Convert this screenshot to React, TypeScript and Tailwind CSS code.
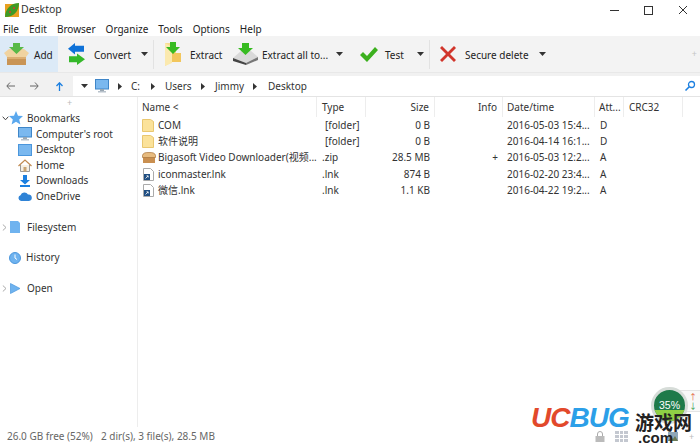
import React from "react";

const Caret = () => (
  <svg width="7" height="4" viewBox="0 0 7 4" className="shrink-0">
    <path d="M0 0h7L3.5 4z" fill="#333" />
  </svg>
);

const PathArrow = () => (
  <svg width="4" height="7" viewBox="0 0 4 7" className="shrink-0">
    <path d="M0 0l4 3.5L0 7z" fill="#333" />
  </svg>
);

const Divider = () => <div className="w-px h-[29px] bg-[#e2e2e2] shrink-0" />;

const Leaf = () => (
  <svg width="16" height="16" viewBox="0 0 16 16">
    <rect x="1" y="2" width="14" height="13" fill="#e8a020" />
    <path d="M1 15C1 7 7 1 15 1c0 8-5 14-14 14z" fill="#3f9a25" />
    <circle cx="6" cy="10" r="1" fill="#d33" />
    <circle cx="10" cy="6" r="1" fill="#d33" />
  </svg>
);

const AddIcon = () => (
  <svg width="25" height="22" viewBox="0 0 25 22" className="shrink-0">
    <path d="M3 11h19v11H3z" fill="#c99556" />
    <path d="M0 10l5-4h15l5 4-3 4H3z" fill="#f0d3a0" />
    <path d="M3 14h19v2H3z" fill="#dcae72" />
    <path d="M9 0h7v4h4l-7.500 7L5 4h4z" fill="#58b948" />
  </svg>
);

const ConvertIcon = () => (
  <svg width="17" height="22" viewBox="0 0 17 25" preserveAspectRatio="none" className="shrink-0">
    <path d="M7 0v3h9v7H7v3L0 6.500z" fill="#0f72d8" />
    <path d="M9 12v3H1v7h8v3l8-6.500z" fill="#35b82a" />
  </svg>
);

const FolderIcon = () => (
  <svg width="18" height="25" viewBox="0 0 18 25" className="shrink-0">
    <path d="M1 1h11v10h5v9H8l-7 4z" fill="#f7dd8f" />
    <path d="M8 11h9v9H8z" fill="#f2c65c" />
    <path d="M1 1l7 4v16l-7 3z" fill="#fbe9ae" />
    <path d="M6 0h6v5h4l-7 7-7-7h4z" fill="#37bb21" />
  </svg>
);

const DriveIcon = () => (
  <svg width="26" height="22" viewBox="0 0 26 22" className="shrink-0">
    <path d="M1 15l8-7h10l7 6-12 6z" fill="#d9d9d9" />
    <path d="M1 15l13 5v2L1 18z" fill="#444" />
    <path d="M14 20l12-6v3l-12 5z" fill="#777" />
    <path d="M10 0h7v5h4l-7.500 7L6 5h4z" fill="#37bb21" />
  </svg>
);

const ComputerIcon = () => (
  <svg width="14" height="14" viewBox="0 0 14 14" className="shrink-0">
    <rect x="0.500" y="0.500" width="13" height="9.500" fill="#7ab8ef" stroke="#3f86c8" />
    <rect x="5" y="10" width="4" height="2" fill="#9aa7b2" />
    <rect x="3" y="12" width="8" height="1.500" fill="#b8c2cb" />
  </svg>
);

const SideFolder = () => (
  <svg width="14" height="12" viewBox="0 0 14 12" className="shrink-0">
    <rect x="0.500" y="0.500" width="13" height="11" fill="#7ab8ef" stroke="#4b96dc" />
  </svg>
);

const HomeIcon = () => (
  <svg width="14" height="13" viewBox="0 0 14 13" className="shrink-0">
    <path d="M2.500 6v6.500h9V6" fill="#f6efe2" stroke="#999" />
    <path d="M0.500 7L7 1l6.500 6" fill="none" stroke="#c08a50" strokeWidth="1.200" />
    <rect x="5.500" y="8" width="3" height="4.500" fill="#c9a472" />
  </svg>
);

const DownloadIcon = () => (
  <svg width="10" height="12" viewBox="0 0 10 12" className="shrink-0 ml-[2px]">
    <path d="M3 0h4v5h3L5 9.500 0 5h3z" fill="#1b7fe0" />
    <rect x="0" y="10" width="10" height="2" fill="#1b7fe0" />
  </svg>
);

const CloudIcon = () => (
  <svg width="14" height="10" viewBox="0 0 14 10" className="shrink-0">
    <path d="M3 10a3 3 0 0 1-.5-5.800A4.200 4.200 0 0 1 10 3.500 3.200 3.200 0 0 1 11 10z" fill="#2f83d6" />
  </svg>
);

const ChevronDown = () => (
  <svg width="7" height="5" viewBox="0 0 7 5" className="shrink-0">
    <path d="M0.700 0.700L3.500 3.800 6.300 0.700" fill="none" stroke="#444" />
  </svg>
);

const ChevronRight = () => (
  <svg width="5" height="7" viewBox="0 0 5 7" className="shrink-0">
    <path d="M0.800 0.500L4 3.500 0.800 6.500" fill="none" stroke="#aaa" />
  </svg>
);

const FileFolder = () => (
  <svg width="12" height="13" viewBox="0 0 12 13" className="shrink-0">
    <path d="M0.500 0.500h8l3 2v10h-11z" fill="#fbe29a" stroke="#e9c770" />
  </svg>
);

const ZipIcon = () => (
  <svg width="14" height="12" viewBox="0 0 14 12" className="shrink-0">
    <path d="M1 4h12v7H1z" fill="#c98f50" />
    <path d="M0.500 3.500C1 1 3 0.500 7 0.500s6 .5 6.500 3v2h-13z" fill="#e7bb7f" stroke="#a9743c" strokeWidth="0.700" />
  </svg>
);

const LinkIcon = () => (
  <svg width="11" height="13" viewBox="0 0 11 13" className="shrink-0 ml-[1px]">
    <path d="M0.500 0.500h7l3 3v9h-10z" fill="#fff" stroke="#aaa" />
    <rect x="1" y="6" width="6" height="6" fill="#1f4e82" />
    <path d="M2.500 10.500L5 8M3.500 7.800H5.200V9.500" stroke="#fff" strokeWidth="0.800" fill="none" />
  </svg>
);

const bookmarks = [
  { icon: <ComputerIcon />, label: "Computer's root" },
  { icon: <SideFolder />, label: "Desktop" },
  { icon: <HomeIcon />, label: "Home" },
  { icon: <DownloadIcon />, label: "Downloads" },
  { icon: <CloudIcon />, label: "OneDrive" },
];

const files = [
  { icon: <FileFolder />, name: "COM", type: "[folder]", indent: true, size: "0 B", info: "", date: "2016-05-03 15:4...", attr: "D" },
  { icon: <FileFolder />, name: "软件说明", type: "[folder]", indent: true, size: "0 B", info: "", date: "2016-04-14 16:1...", attr: "D" },
  { icon: <ZipIcon />, name: "Bigasoft Video Downloader(视频...", type: ".zip", indent: false, size: "28.5 MB", info: "+", date: "2016-05-03 12:2...", attr: "A" },
  { icon: <LinkIcon />, name: "iconmaster.lnk", type: ".lnk", indent: false, size: "874 B", info: "", date: "2016-02-20 23:4...", attr: "A" },
  { icon: <LinkIcon />, name: "微信.lnk", type: ".lnk", indent: false, size: "1.1 KB", info: "", date: "2016-04-22 19:2...", attr: "A" },
];

const Watermark = () => (
  <>
    <div className="absolute left-[531px] top-[401px] text-[28px] leading-[34px] font-bold italic tracking-[-1px] font-['Liberation_Sans',sans-serif]">
      <span className="text-[#e2492b]">UC</span>
      <span className="text-[#2c9fe8]">BUG</span>
    </div>
    <div className="absolute left-[635px] top-[412px] text-[19px] leading-[19px] font-bold text-[#222] font-['Noto_Sans_CJK_SC',sans-serif]">
      游戏网
    </div>
    <div className="absolute left-[638px] top-[431px] text-[15px] leading-[13px] font-bold text-[#222] font-['Liberation_Sans',sans-serif]">
      .com
    </div>
  </>
);

const Meter = () => (
  <>
    <div className="absolute right-0 top-[390px] w-[24px] h-[22px] border border-r-0 border-[#e4e4e4] rounded-l-[3px] bg-[#f8f8f8] flex flex-col items-end pr-[3px] justify-center text-[8px] leading-[9px]">
      <span className="text-[#e2603a]">↑</span>
      <span className="text-[#2f9a4a]">↓</span>
    </div>
    <div className="absolute left-[651px] top-[387px] w-[37px] h-[37px] rounded-full bg-[#1e7a4a] border-[3px] border-[#d6dcd8] overflow-hidden flex items-start justify-center pt-[9px]">
      <div className="absolute left-0 right-0 bottom-0 h-[11px] bg-[#8fd045]" />
      <span className="relative text-[10.500px] leading-[12px] text-white font-['Liberation_Sans',sans-serif]">35%</span>
    </div>
  </>
);

export default function App() {
  return (
    <div className="relative w-[700px] h-[448px] overflow-hidden bg-white flex flex-col text-[10px] text-[#333] font-['Noto_Sans','Noto_Sans_CJK_SC',sans-serif]">
      {/* title bar */}
      <div className="h-[20px] flex items-center pl-1 shrink-0">
        <Leaf />
        <span className="ml-[1px] text-[10.500px]">Desktop</span>
        <div className="ml-auto flex items-center gap-[25px] pr-[12px]">
          <div className="w-[9px] h-px bg-[#333]" />
          <div className="w-[9px] h-[9px] border border-[#333]" />
          <svg width="10" height="10" viewBox="0 0 10 10">
            <path d="M1 1l8 8M9 1l-8 8" stroke="#333" />
          </svg>
        </div>
      </div>

      {/* menu */}
      <div className="h-[16px] flex items-center gap-[10px] pl-[3px] pt-[2px] text-[#222] shrink-0">
        {["File", "Edit", "Browser", "Organize", "Tools", "Options", "Help"].map((m) => (
          <span key={m}>{m}</span>
        ))}
      </div>

      {/* toolbar */}
      <div className="h-[37px] bg-[#f3f3f3] border-b border-[#e8e8e8] flex items-center text-[#222] whitespace-nowrap shrink-0">
        <div className="w-[58px] h-full bg-[#dceaf7] flex items-center pl-[4px] gap-[5px] shrink-0">
          <AddIcon />
          <span className="pt-[2px]">Add</span>
        </div>
        <div className="flex items-center pl-[10px] w-[95px] shrink-0">
          <ConvertIcon />
          <span className="ml-[9px] w-[47px] pt-[2px]">Convert</span>
          <Caret />
        </div>
        <Divider />
        <div className="flex items-center pl-[10px] w-[78px] shrink-0">
          <FolderIcon />
          <span className="ml-[8px] pt-[2px]">Extract</span>
        </div>
        <div className="flex items-center w-[127px] shrink-0">
          <DriveIcon />
          <span className="ml-[4px] w-[74px] pt-[2px]">Extract all to...</span>
          <Caret />
        </div>
        <div className="flex items-center w-[70px] shrink-0">
          <svg width="20" height="17" viewBox="0 0 20 17" className="shrink-0">
            <path d="M1 9l3-3 4 4 8-9 3 3L8 16z" fill="#3cb01e" />
          </svg>
          <span className="ml-[6px] w-[32px] pt-[2px]">Test</span>
          <Caret />
        </div>
        <Divider />
        <div className="flex items-center pl-[9px]">
          <svg width="18" height="18" viewBox="0 0 18 18" className="shrink-0">
            <path d="M1 3l2-2 6 6 6-6 2 2-6 6 6 6-2 2-6-6-6 6-2-2 6-6z" fill="#d1352b" />
          </svg>
          <span className="ml-[8px] w-[74px] pt-[2px]">Secure delete</span>
          <Caret />
        </div>
        <span className="ml-auto pr-[3px] text-[#c4c4c4] text-[9px]">+</span>
      </div>

      {/* nav row */}
      <div className="h-[24px] bg-[#f1f1f1] border-b border-[#e4e4e4] flex items-center pt-[3px] shrink-0">
        <div className="w-[73px] flex items-center pl-[6px] shrink-0">
          <svg width="9" height="8" viewBox="0 0 9 8" className="shrink-0">
            <path d="M4 0.500L0.800 4 4 7.500M1 4h8" fill="none" stroke="#666" />
          </svg>
          <svg width="9" height="8" viewBox="0 0 9 8" className="shrink-0 ml-[15px]">
            <path d="M5 0.500L8.200 4 5 7.500M8 4H0" fill="none" stroke="#666" />
          </svg>
          <svg width="7" height="9" viewBox="0 0 7 9" className="shrink-0 ml-[17px]">
            <path d="M0.500 4L3.500 0.800 6.500 4M3.500 1v8" fill="none" stroke="#1b7fe0" strokeWidth="1.300" />
          </svg>
        </div>
        <div className="flex-1 h-[20px] bg-white flex items-center pl-[8px] text-[#333]">
          <Caret />
          <span className="ml-[7px]"><ComputerIcon /></span>
          <span className="ml-[9px]"><PathArrow /></span>
          <span className="ml-[9px] w-[20px]">C:</span>
          <PathArrow />
          <span className="ml-[10px] w-[36px]">Users</span>
          <PathArrow />
          <span className="ml-[10px] w-[38px]">Jimmy</span>
          <PathArrow />
          <span className="ml-[11px]">Desktop</span>
          <svg width="12" height="12" viewBox="0 0 12 12" className="ml-auto mr-[4px]">
            <circle cx="7.500" cy="4.500" r="3" fill="none" stroke="#1b7fe0" strokeWidth="1.300" />
            <path d="M5 7L1.500 10.500" stroke="#1b7fe0" strokeWidth="1.600" />
          </svg>
        </div>
      </div>

      <div className="flex-1 flex min-h-0">
        {/* sidebar */}
        <div className="w-[138px] border-r border-[#ededed] flex flex-col shrink-0">
          <div className="h-[13px] text-center text-[#bbb] text-[9px] leading-[12px] pl-[2px]">+</div>
          <div className="h-[16.500px] flex items-center pl-[2px]">
            <ChevronDown />
            <svg width="14" height="14" viewBox="0 0 14 14" className="shrink-0">
              <path d="M7 0l2 4.700 5 .4-3.800 3.300 1.200 5L7 10.700 2.600 13.400l1.200-5L0 5.100l5-.4z" fill="#5aa8ee" />
            </svg>
            <span className="ml-[4px]">Bookmarks</span>
          </div>
          {bookmarks.map((b) => (
            <div key={b.label} className="h-[15.500px] flex items-center pl-[18px]">
              <div className="w-[18px] flex justify-start">{b.icon}</div>
              <span>{b.label}</span>
            </div>
          ))}
          <div className="h-[15.500px] mt-[15.500px] flex items-center pl-[2px]">
            <ChevronRight />
            <svg width="11" height="12" viewBox="0 0 11 12" className="ml-[3px] shrink-0">
              <path d="M0 0h8l2 2v10H0z" fill="#6fb3ef" />
            </svg>
            <span className="ml-[6px]">Filesystem</span>
          </div>
          <div className="h-[15.500px] mt-[15px] flex items-center pl-[9px]">
            <svg width="12" height="12" viewBox="0 0 12 12" className="shrink-0">
              <circle cx="6" cy="6" r="5.500" fill="#6fb3ef" stroke="#4b96dc" />
              <path d="M6 2.500V6l2 1.500" fill="none" stroke="#fff" />
            </svg>
            <span className="ml-[5px]">History</span>
          </div>
          <div className="h-[15.500px] mt-[15px] flex items-center pl-[2px]">
            <ChevronRight />
            <svg width="11" height="11" viewBox="0 0 11 11" className="ml-[3px] shrink-0">
              <path d="M0.500 0.500L10 5.500 0.500 10.500z" fill="#6fb3ef" stroke="#4b96dc" strokeWidth="0.700" />
            </svg>
            <span className="ml-[6px]">Open</span>
          </div>
        </div>

        {/* file list */}
        <div className="flex-1 min-w-0">
          <div className="grid grid-cols-[179px_49px_69px_68px_92px_29px_59px] h-[20px] items-center">
            <div className="pl-[4px] border-r border-[#ededed] h-full flex items-center">Name &lt;</div>
            <div className="pl-[5px] border-r border-[#ededed] h-full flex items-center">Type</div>
            <div className="pr-[5px] border-r border-[#ededed] h-full flex items-center justify-end">Size</div>
            <div className="pr-[5px] border-r border-[#ededed] h-full flex items-center justify-end">Info</div>
            <div className="pl-[4px] border-r border-[#ededed] h-full flex items-center">Date/time</div>
            <div className="pl-[4px] border-r border-[#ededed] h-full flex items-center whitespace-nowrap overflow-hidden">Att...</div>
            <div className="pl-[5px] border-r border-[#ededed] h-full flex items-center">CRC32</div>
          </div>
          {files.map((f) => (
            <div key={f.name} className="grid grid-cols-[179px_49px_69px_68px_92px_29px_59px] h-[16.400px] items-center">
              <div className="flex items-center pl-[4px] overflow-hidden whitespace-nowrap">
                <div className="w-[16px] shrink-0">{f.icon}</div>
                <span>{f.name}</span>
              </div>
              <div className={f.indent ? "pl-[8px]" : "pl-[5px]"}>{f.type}</div>
              <div className="text-right pr-[5px]">{f.size}</div>
              <div className="text-right pr-[5px]">{f.info}</div>
              <div className="pl-[4px] whitespace-nowrap">{f.date}</div>
              <div className="pl-[5px]">{f.attr}</div>
              <div />
            </div>
          ))}
        </div>
      </div>

      {/* status bar */}
      <div className="h-[21px] flex items-center pl-[7px] pb-[2px] text-[#666] shrink-0">
        <span className="w-[94px] shrink-0">26.0 GB free (52%)</span>
        <span className="w-[494px] shrink-0">2 dir(s), 3 file(s), 28.5 MB</span>
        <svg width="10" height="11" viewBox="0 0 10 11" className="shrink-0">
          <path d="M2.500 5V3a2.500 2.500 0 0 1 5 0v2" fill="none" stroke="#aaa" />
          <rect x="0.500" y="5" width="9" height="6" fill="#bbb" />
        </svg>
        <div className="ml-[10px] grid grid-cols-3 gap-[1px] w-[13px] shrink-0">
          {[0, 1, 2, 3, 4, 5, 6, 7, 8].map((i) => (
            <div key={i} className="h-[3px] bg-[#c4c8d0]" />
          ))}
        </div>
        <svg width="10" height="9" viewBox="0 0 10 9" className="ml-[40px] shrink-0">
          <rect width="10" height="9" fill="#8fa7b8" />
          <path d="M0 9l3-4 2 2 2-3 3 5z" fill="#6b7a55" />
        </svg>
        <span className="ml-[11px] text-[#bbb] text-[9px]">+</span>
      </div>

      <Meter />
      <Watermark />
    </div>
  );
}
